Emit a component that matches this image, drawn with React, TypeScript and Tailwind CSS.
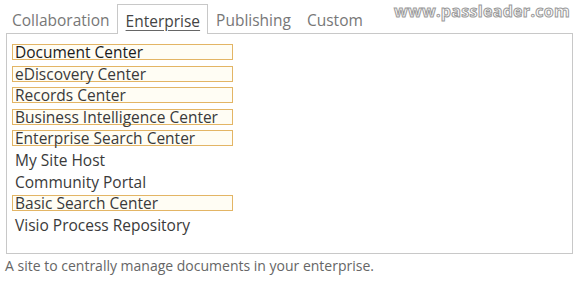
import React from 'react';

const items = [
  { label: 'Document Center', boxed: true, dark: true },
  { label: 'eDiscovery Center', boxed: true },
  { label: 'Records Center', boxed: true },
  { label: 'Business Intelligence Center', boxed: true },
  { label: 'Enterprise Search Center', boxed: true },
  { label: 'My Site Host', boxed: false },
  { label: 'Community Portal', boxed: false },
  { label: 'Basic Search Center', boxed: true },
  { label: 'Visio Process Repository', boxed: false },
];

export default function App() {
  return (
    <div className="relative w-[580px] h-[281px] bg-white font-['Open_Sans','Noto_Sans',sans-serif] overflow-hidden">
      {/* watermark */}
      <div className="absolute top-[-1px] right-[10px] text-[16px] font-bold tracking-[0.3px] text-white [-webkit-text-stroke:1px_#9a9a9a]">
        www.passleader.com
      </div>

      <div className="pl-[5px] pr-[7px] pt-[4px]">
        {/* tabs */}
        <div className="flex items-end h-[29px] text-[15.5px] text-[#777]">
          <div className="px-[7px] h-[28px] leading-[30px]">Collaboration</div>
          <div className="relative z-10 -mb-px pl-[8px] pr-[7px] h-[30px] leading-[32px] bg-white border border-b-0 border-[#c8c8c8] text-[#444] underline underline-offset-[3px] decoration-[#666]">
            Enterprise
          </div>
          <div className="px-[8px] h-[28px] leading-[30px]">Publishing</div>
          <div className="px-[8px] h-[28px] leading-[30px]">Custom</div>
        </div>

        {/* list box */}
        <div className="ml-[1px] h-[221px] border border-[#c8c8c8] pt-[10px] pl-[5px]">
          {items.map((it) => (
            <div key={it.label} className="h-[21.6px]">
              <div
                className={
                  'w-[221px] h-[16px] flex items-center pl-[2px] text-[15.5px] leading-[16px] ' +
                  (it.boxed
                    ? 'border border-[#e3b565] bg-[#fffdf4] '
                    : 'border border-transparent ') +
                  (it.dark ? 'text-[#1a1a1a]' : 'text-[#3a3a3a]')
                }
              >
                {it.label}
              </div>
            </div>
          ))}
        </div>

        <div className="mt-[3px] text-[14px] text-[#666] leading-[18px]">
          A site to centrally manage documents in your enterprise.
        </div>
      </div>
    </div>
  );
}
